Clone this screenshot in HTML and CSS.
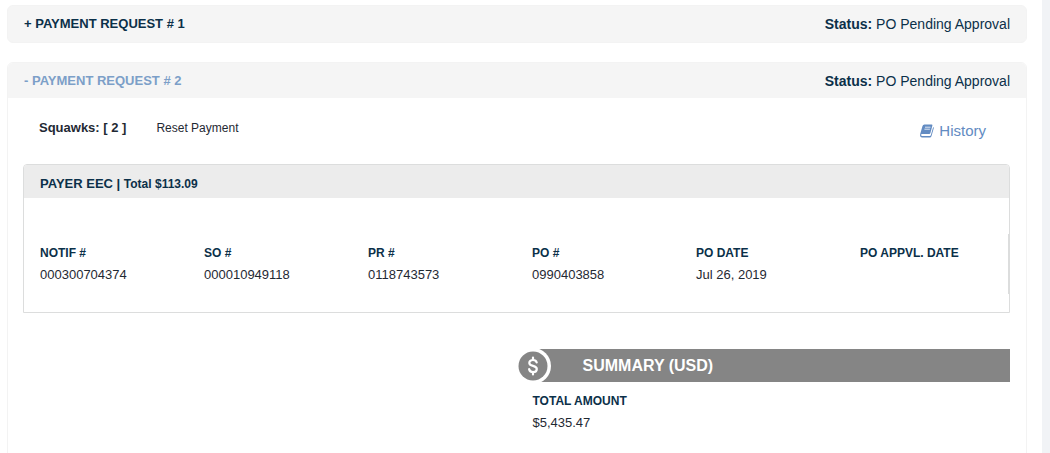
FILE: index.html
```html
<!DOCTYPE html>
<html lang="en">
<head>
<meta charset="utf-8">
<meta name="viewport" content="width=device-width, initial-scale=1">
<title>Payment Requests</title>
<link rel="stylesheet" href="styles.css">
</head>
<body>
<main class="page">
  <section class="request">
    <header class="request-header">
      <h2 class="request-title"><button type="button" class="toggle" aria-expanded="false">+ PAYMENT REQUEST # 1</button></h2>
      <p class="status"><strong>Status:</strong> PO Pending Approval</p>
    </header>
  </section>

  <section class="request request-open">
    <header class="request-header">
      <h2 class="request-title"><button type="button" class="toggle toggle-open" aria-expanded="true">- PAYMENT REQUEST # 2</button></h2>
      <p class="status"><strong>Status:</strong> PO Pending Approval</p>
    </header>
    <div class="request-body">
      <div class="actions">
        <strong class="squawks">Squawks: [ 2 ]</strong>
        <button type="button" class="reset">Reset Payment</button>
        <a href="#history" class="history">
          <svg class="book" viewBox="0 0 14 14" aria-hidden="true">
            <path fill="currentColor" d="M4.400 .5H11.600q1.100 0 .8 1L10.400 9Q10.100 10 9.200 10H1.900Q1.100 10.200 1.100 11q0 1 1.200 1H9.800q.8 0 1-.8L13.200 3q.8.400.5 1.400L11.500 12q-.4 1.500-1.800 1.500H2Q.2 13.500.1 11.700L.2 9.900 2.500 2Q3 .5 4.400.5z"/>
            <path stroke="#fff" stroke-width=".8" d="M5 3.200h5.500M4.400 5.200h5.500"/>
          </svg>
          History
        </a>
      </div>

      <section class="payer">
        <h3 class="payer-title">PAYER EEC | <span class="payer-total">Total $113.09</span></h3>
        <div class="payer-scroll">
          <table class="orders">
            <thead>
              <tr><th>NOTIF #</th><th>SO #</th><th>PR #</th><th>PO #</th><th>PO DATE</th><th>PO APPVL. DATE</th></tr>
            </thead>
            <tbody>
              <tr><td>000300704374</td><td>000010949118</td><td>0118743573</td><td>0990403858</td><td>Jul 26, 2019</td><td></td></tr>
            </tbody>
          </table>
        </div>
      </section>

      <section class="summary">
        <h3 class="summary-title">
          <svg class="coin" viewBox="0 0 36 36" aria-hidden="true">
            <circle cx="18" cy="18" r="18" fill="#fff"/>
            <circle cx="18" cy="18" r="14.500" fill="#858585"/>
            <path fill="none" stroke="#fff" stroke-width="2.200" stroke-linecap="round" d="M21.700 14.500C21.200 12.700 20 12 18 12c-2.300 0-3.700 1.200-3.700 2.900 0 4 7.500 2 7.500 6 0 1.900-1.500 3.100-3.800 3.100-2.200 0-3.600-1-3.900-3M18 9.500V12M18 24v2.500"/>
          </svg>
          SUMMARY (USD)
        </h3>
        <dl class="totals">
          <dt>TOTAL AMOUNT</dt>
          <dd>$5,435.47</dd>
        </dl>
      </section>
    </div>
  </section>
</main>
</body>
</html>
```
FILE: styles.css
```css
* {
  box-sizing: border-box;
}

body {
  margin: 0;
  background: #f1f3f6;
  color: #1f2933;
  font: 13px/20px "Liberation Sans", Arial, sans-serif;
}

h2, h3, p, dl, dd {
  margin: 0;
}

button {
  padding: 0;
  border: 0;
  background: none;
  color: inherit;
  font: inherit;
  cursor: pointer;
}

.page {
  display: flex;
  flex-direction: column;
  gap: 19px;
  min-height: 100vh;
  margin-right: 8px;
  padding: 5px 15px 0 7px;
  background: #fff;
}

.request {
  border: 1px solid #f3f3f3;
  border-radius: 6px;
  background: #f5f5f5;
  padding-bottom: 1px;
  overflow: hidden;
}

.request-open {
  flex: 1;
  padding-bottom: 0;
  background: #fff;
}

.request-header {
  display: flex;
  justify-content: space-between;
  align-items: center;
  min-height: 35px;
  padding: 0 16px;
  background: #f5f5f5;
  color: #0b3049;
}

.request-title {
  font-size: 13px;
}

.toggle-open {
  color: #7c9fc8;
}

.status {
  font-size: 14px;
}

.request-body {
  padding: 16px 16px 24px 15px;
}

.actions {
  display: flex;
  align-items: flex-start;
  gap: 30px;
  min-height: 34px;
  margin-bottom: 16px;
  padding: 4px 24px 0 16px;
}

.squawks {
  font-size: 13px;
}

.reset {
  font-size: 12px;
}

.history {
  display: flex;
  align-items: center;
  gap: 5px;
  margin-left: auto;
  padding-top: 3px;
  color: #628bc2;
  font-size: 15px;
  text-decoration: none;
}

.book {
  width: 14px;
  height: 14px;
}

.payer {
  border: 1px solid #dcdddd;
  border-radius: 4px 4px 0 0;
}

.payer-title {
  padding: 9px 16px 4px;
  border-radius: 3px 3px 0 0;
  background: #ececec;
  color: #0b3049;
  font-size: 13px;
}

.payer-total {
  font-size: 12px;
}

.payer-scroll {
  margin: 36px 0 18px;
  padding: 8px 0;
  border-right: 1px solid #dcdddd;
}

.orders {
  width: 100%;
  table-layout: fixed;
  border-collapse: collapse;
}

.orders th,
.orders td {
  height: 22px;
  padding: 0 0 0 16px;
  text-align: left;
}

.orders th,
.totals dt {
  color: #0b3049;
  font-size: 12px;
  font-weight: bold;
}

.summary {
  width: 50%;
  margin-top: 36px;
  margin-left: auto;
  padding-left: 16px;
}

.summary-title {
  display: flex;
  align-items: center;
  gap: 32px;
  height: 33px;
  background: #858585;
  color: #fff;
  font-size: 16px;
}

.coin {
  flex: none;
  width: 36px;
  height: 36px;
  margin-left: -18px;
}

.totals {
  padding-top: 8px;
  line-height: 22px;
}
```
